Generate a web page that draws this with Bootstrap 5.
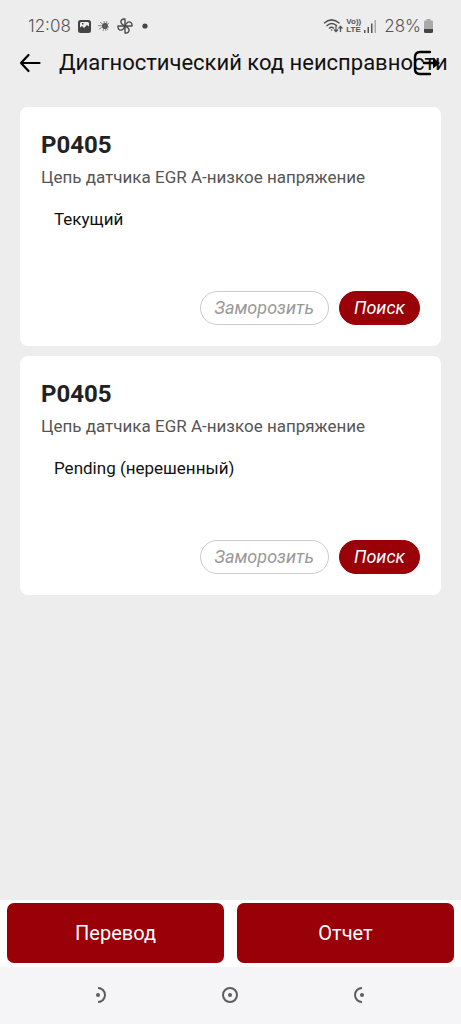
<!DOCTYPE html>
<html lang="ru">
<head>
<meta charset="utf-8">
<meta name="viewport" content="width=device-width, initial-scale=1">
<title>Диагностический код неисправности</title>
<link href="https://cdn.jsdelivr.net/npm/bootstrap@5.3.0/dist/css/bootstrap.min.css" rel="stylesheet">
<style>
  :root { --brand: #990007; --page: #ededed; }
  body { background: var(--page); font-family: Roboto, sans-serif; color: #111; }
  .status-bar { height: 42px; padding: 10px 28px 0; color: #555; font: 300 17px/32px Inter, sans-serif; }
  .status-left { gap: 7px; }
  .status-right { gap: 3px; }
  .volte { font: 700 8px/8px "Liberation Sans", sans-serif; }
  .title-bar { height: 42px; padding: 0 18px; }
  .title-bar h1 { font-size: 22px; line-height: 44px; margin-left: 17px; }
  .exit-btn { right: 18px; }
  .codes { padding: 23px 20px 10px; gap: 10px; }
  .code-card { border-radius: 8px; padding: 20px 21px 21px; min-height: 239px; }
  .code-card h2 { font-size: 24px; line-height: 36px; color: #222; }
  .code-desc { font-size: 17px; line-height: 28px; color: #555; }
  .code-state { font-size: 17px; line-height: 28px; margin-top: 14px; padding-left: 13px; }
  .code-tools { gap: 10px; }
  .pill { height: 34px; font-size: 18px; line-height: 32px; font-style: italic; padding: 0 14px; }
  .pill-brand { background: var(--brand); color: #fff; border-color: var(--brand); }
  .pill-off, .pill-off:disabled { color: #999; border-color: #ccc; opacity: 1; }
  .actions { padding: 3px 7px 4px; gap: 13px; }
  .action-btn { height: 60px; border-radius: 7px; font-size: 20px; line-height: 32px; background: var(--brand); color: #fff; }
  .action-btn:hover, .pill-brand:hover { background: #7d0006; color: #fff; }
  .system-nav { height: 57px; background: #f5f5f7; padding: 0 36px 2px; }
</style>
</head>
<body class="min-vh-100 d-flex flex-column">
<header>
  <div class="status-bar d-flex justify-content-between">
    <div class="status-left d-flex align-items-center">
      <span>12:08</span>
      <svg width="13" height="13" viewBox="0 0 13 13"><path fill="#444" fill-rule="evenodd" d="M2.500 0h8A2.500 2.500 0 0 1 13 2.500v8a2.500 2.500 0 0 1-2.500 2.500h-8A2.500 2.500 0 0 1 0 10.500v-8A2.500 2.500 0 0 1 2.500 0zM2 7.500l2-1.500 2 2 3-3 2 1.500V3L10 2H3L2 3zM4 3h1.500v1.500H4z"/></svg>
      <svg width="12" height="12" viewBox="0 0 12 12"><circle cx="7" cy="6" r="2.900" fill="#444"/><path stroke="#666" stroke-width=".7" d="M7 6L0 5.500M7 6L1 9M7 6L2 2M7 6L5 11M7 6L6 1M7 6l2-5M7 6l4-3M7 6l4 1M7 6l3 4M7 6l1 5"/></svg>
      <svg width="16" height="16" viewBox="0 0 16 16" fill="none" stroke="#4b4b4b" stroke-width="1.400" stroke-linejoin="round"><path d="M8 8V1C5 .6 3.200 2.800 4.200 5Q5.200 7.200 8 8"/><path d="M8 8h7c.4-3-1.800-4.800-4-3.800Q8.800 5.200 8 8"/><path d="M8 8v7c3 .4 4.800-1.800 3.800-4Q10.800 8.800 8 8"/><path d="M8 8H1c-.4 3 1.800 4.800 4 3.800Q7.200 10.800 8 8"/></svg>
      <svg width="10" height="10" viewBox="0 0 10 10"><circle cx="5" cy="5" r="2.600" fill="#444"/></svg>
    </div>
    <div class="status-right d-flex align-items-center">
      <svg width="20" height="16" viewBox="0 0 20 16" fill="none" stroke="#505050" stroke-width="1.500"><path d="M1 5.200Q8.500-1.500 16.500 5.200M3.500 8Q8.800 3 14 8M6 10.500Q8.800 8 11 10.500"/><path stroke-width="1.200" d="M13 8v5.500m-2-2l2 2.200 2-2.200M17.500 14V8.500m-2 2l2-2.200 2 2.200"/><circle cx="8.600" cy="12" r=".8" fill="#505050" stroke="none"/></svg>
      <span class="volte d-flex flex-column"><span>Vo))</span><span>LTE</span></span>
      <svg width="13" height="14" viewBox="0 0 13 14" fill="#555"><path d="M0 11h1.500v3H0zM3.500 8H5v6H3.500zM7 4.500h1.500V14H7z"/><path fill="#aaa" d="M10.500 1H12v13h-1.500z"/></svg>
      <span class="ms-1">28%</span>
      <svg width="9" height="14" viewBox="0 0 9 14"><path fill="#aaa" d="M2.500 0h4v1.500H8Q9 1.500 9 3v8H0V3q0-1.500 1-1.500h1.500z"/><path fill="#444" d="M0 10h9v2.500Q9 14 7.500 14h-6Q0 14 0 12.500z"/></svg>
    </div>
  </div>
  <div class="title-bar position-relative d-flex align-items-center">
    <button type="button" class="btn p-0 border-0 d-flex" aria-label="Назад">
      <svg width="24" height="22" viewBox="0 0 24 22" fill="none" stroke="#000" stroke-width="2.200" stroke-linecap="round" stroke-linejoin="round"><path d="M21.500 11H3M10.500 3L3 11l7.500 8"/></svg>
    </button>
    <h1 class="fw-normal mb-0 text-nowrap">Диагностический код неисправности</h1>
    <button type="button" class="exit-btn btn p-0 border-0 d-flex position-absolute" aria-label="Выход">
      <svg width="30" height="26" viewBox="0 0 30 26" fill="none" stroke="#000" stroke-width="2.400"><path stroke-linecap="round" d="M17 2H7Q2 2 2 7v12q0 5 5 5h10M11 13h13"/><path d="M20 7.500l7 5.500-7 5.500z" fill="#000" stroke="none"/></svg>
    </button>
  </div>
</header>
<main class="codes flex-grow-1 d-flex flex-column">
  <article class="code-card bg-white d-flex flex-column">
    <h2 class="fw-bold mb-0">P0405</h2>
    <p class="code-desc mb-0">Цепь датчика EGR А-низкое напряжение</p>
    <p class="code-state mb-0">Текущий</p>
    <div class="code-tools d-flex justify-content-end mt-auto">
      <button type="button" class="btn rounded-pill pill pill-off" disabled>Заморозить</button>
      <button type="button" class="btn rounded-pill pill pill-brand">Поиск</button>
    </div>
  </article>
  <article class="code-card bg-white d-flex flex-column">
    <h2 class="fw-bold mb-0">P0405</h2>
    <p class="code-desc mb-0">Цепь датчика EGR А-низкое напряжение</p>
    <p class="code-state mb-0">Pending (нерешенный)</p>
    <div class="code-tools d-flex justify-content-end mt-auto">
      <button type="button" class="btn rounded-pill pill pill-off" disabled>Заморозить</button>
      <button type="button" class="btn rounded-pill pill pill-brand">Поиск</button>
    </div>
  </article>
</main>
<footer class="bg-white">
  <div class="actions d-flex">
    <button type="button" class="btn action-btn border-0 flex-fill w-50">Перевод</button>
    <button type="button" class="btn action-btn border-0 flex-fill w-50">Отчет</button>
  </div>
  <nav class="system-nav d-flex justify-content-around align-items-center" aria-label="Система">
    <button type="button" class="btn p-0 border-0 d-flex" aria-label="Недавние"><svg width="18" height="18" viewBox="0 0 18 18" fill="none" stroke="#5c5c60" stroke-width="2"><path d="M6 2a7 7 0 1 1 0 14"/><circle cx="6" cy="9" r="2" fill="#5c5c60" stroke="none"/></svg></button>
    <button type="button" class="btn p-0 border-0 d-flex" aria-label="Домой"><svg width="18" height="18" viewBox="0 0 18 18" fill="none" stroke="#5c5c60" stroke-width="2"><circle cx="9" cy="9" r="7"/><circle cx="9" cy="9" r="2" fill="#5c5c60" stroke="none"/></svg></button>
    <button type="button" class="btn p-0 border-0 d-flex" aria-label="Назад"><svg width="18" height="18" viewBox="0 0 18 18" fill="none" stroke="#5c5c60" stroke-width="2"><path d="M11 2a7 7 0 1 0 0 14"/><circle cx="11" cy="9" r="2" fill="#5c5c60" stroke="none"/></svg></button>
  </nav>
</footer>
<script src="https://cdn.jsdelivr.net/npm/bootstrap@5.3.0/dist/js/bootstrap.bundle.min.js"></script>
</body>
</html>
